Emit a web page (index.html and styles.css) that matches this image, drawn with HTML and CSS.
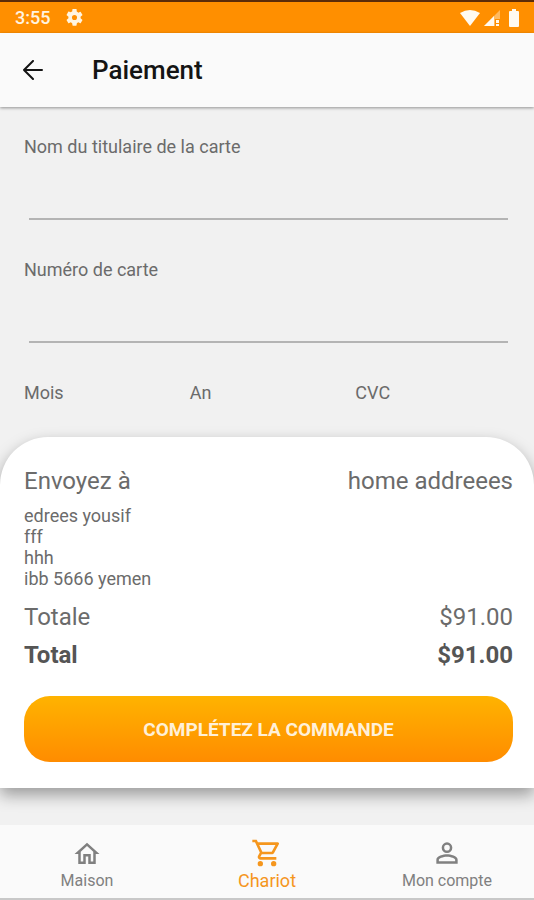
FILE: index.html
```html
<!DOCTYPE html>
<html lang="fr">
<head>
  <meta charset="utf-8">
  <meta name="viewport" content="width=device-width, initial-scale=1">
  <title>Paiement</title>
  <link rel="stylesheet" href="styles.css">
</head>
<body>
  <div class="status">
    <span class="status-time">3:55</span>
    <svg class="status-gear" viewBox="2 2 20 20" aria-hidden="true"><path fill="currentColor" d="M19.14 12.94c.04-.3.06-.61.06-.94s-.02-.64-.07-.94l2.03-1.58a.49.49 0 0 0 .12-.61l-1.92-3.32a.49.49 0 0 0-.59-.22l-2.39.96a7 7 0 0 0-1.62-.94l-.36-2.54A.48.48 0 0 0 13.92 2h-3.84c-.24 0-.43.17-.47.41l-.36 2.54c-.59.24-1.13.57-1.62.94l-2.39-.96a.48.48 0 0 0-.59.22L2.74 8.87a.47.47 0 0 0 .12.61l2.03 1.58a6 6 0 0 0 0 1.88l-2.03 1.58a.49.49 0 0 0-.12.61l1.92 3.32c.12.22.37.29.59.22l2.39-.96c.5.38 1.03.7 1.62.94l.36 2.54c.05.24.24.41.48.41h3.84c.24 0 .44-.17.47-.41l.36-2.54a7 7 0 0 0 1.62-.94l2.39.96c.22.08.47 0 .59-.22l1.92-3.32a.47.47 0 0 0-.12-.61zM12 15a3 3 0 1 1 0-6 3 3 0 0 1 0 6z"/></svg>
    <span class="status-icons">
      <svg width="20" height="16" viewBox="0 0 20 16" aria-hidden="true"><path fill="currentColor" d="M0 3Q10-3 20 3L10 16z"/></svg>
      <svg width="16" height="16" viewBox="0 0 16 16" aria-hidden="true"><path fill="currentColor" opacity=".4" d="M16 0v9h-5v7H0z"/><path fill="currentColor" d="M10 6v10H0zM12 10h3v3h-3zM12 14h3v2h-3z"/></svg>
      <svg class="status-battery" width="10" height="18" viewBox="0 0 10 18" aria-hidden="true"><path fill="currentColor" d="M3 0h4v2h2q1 0 1 1v14q0 1-1 1H1q-1 0-1-1V3q0-1 1-1h2z"/></svg>
    </span>
  </div>

  <header class="topbar">
    <button class="back" type="button" aria-label="Retour">
      <svg width="20" height="20" viewBox="0 0 20 20" aria-hidden="true"><path fill="none" stroke="currentColor" stroke-width="2" stroke-linecap="round" stroke-linejoin="round" d="M19 10H1M10 1L1 10l9 9"/></svg>
    </button>
    <h1>Paiement</h1>
  </header>

  <main>
    <form id="payment" class="form">
      <div class="field">
        <label for="holder">Nom du titulaire de la carte</label>
        <input id="holder" type="text" autocomplete="cc-name">
      </div>
      <div class="field">
        <label for="number">Numéro de carte</label>
        <input id="number" type="text" inputmode="numeric" autocomplete="cc-number">
      </div>
      <div class="details">
        <div class="detail">
          <label for="month">Mois</label>
          <input id="month" type="text" inputmode="numeric">
        </div>
        <div class="detail">
          <label for="year">An</label>
          <input id="year" type="text" inputmode="numeric">
        </div>
        <div class="detail">
          <label for="cvc">CVC</label>
          <input id="cvc" type="text" inputmode="numeric">
        </div>
      </div>
    </form>

    <section class="sheet">
      <div class="row"><span>Envoyez à</span><span>home addreees</span></div>
      <address>edrees yousif<br>fff<br>hhh<br>ibb 5666 yemen</address>
      <div class="row"><span>Totale</span><span>$91.00</span></div>
      <div class="row row-total"><span>Total</span><span>$91.00</span></div>
      <button class="submit" type="submit" form="payment">COMPLÉTEZ LA COMMANDE</button>
    </section>
  </main>

  <nav class="tabs">
    <a class="tab" href="#maison">
      <svg width="30" height="30" viewBox="0 0 24 24" aria-hidden="true"><path fill="currentColor" d="M12 5.690l5 4.500V18h-2v-6H9v6H7v-7.810l5-4.500M12 3L2 12h3v8h6v-6h2v6h6v-8h3L12 3z"/></svg>
      <span>Maison</span>
    </a>
    <a class="tab tab-active" href="#chariot" aria-current="page">
      <svg width="32" height="32" viewBox="0 0 24 24" aria-hidden="true"><path fill="currentColor" d="M15.550 13c.75 0 1.410-.41 1.750-1.030l3.580-6.490A.996.996 0 0 0 20.010 4H5.210l-.94-2H1v2h2l3.600 7.590-1.350 2.440C4.520 15.370 5.480 17 7 17h12v-2H7l1.100-2h7.450zM6.160 6h12.150l-2.760 5H8.530L6.160 6zM7 18a2 2 0 1 0 0 4 2 2 0 0 0 0-4zm10 0a2 2 0 1 0 0 4 2 2 0 0 0 0-4z"/></svg>
      <span>Chariot</span>
    </a>
    <a class="tab" href="#compte">
      <svg width="32" height="32" viewBox="0 0 24 24" aria-hidden="true"><path fill="currentColor" d="M12 5.900a2.100 2.100 0 1 1 0 4.200 2.100 2.100 0 0 1 0-4.200m0 9c2.970 0 6.100 1.460 6.100 2.100v1.100H5.900V17c0-.64 3.130-2.100 6.100-2.100M12 4a4 4 0 1 0 0 8 4 4 0 0 0 0-8zm0 9c-2.670 0-8 1.340-8 4v3h16v-3c0-2.660-5.330-4-8-4z"/></svg>
      <span>Mon compte</span>
    </a>
  </nav>
</body>
</html>
```
FILE: styles.css
```css
* {
  box-sizing: border-box;
}

body {
  margin: 0;
  min-height: 100vh;
  display: flex;
  flex-direction: column;
  background: #f1f1f1;
  color: #6b6b6b;
  font-family: Roboto, "Liberation Sans", sans-serif;
  font-size: 18px;
}

svg {
  display: block;
}

.status {
  display: flex;
  align-items: center;
  height: 33px;
  padding: 0 15px;
  border-top: 2px solid #5c2c08;
  background: #ff8f00;
  color: #fff4e0;
}

.status-time {
  font-weight: 500;
}

.status-gear {
  width: 17px;
  height: 17px;
  margin-left: 16px;
}

.status-icons {
  display: flex;
  align-items: center;
  gap: 4px;
  margin-left: auto;
  color: #fffaf0;
}

.status-battery {
  margin-left: 5px;
}

.topbar {
  display: flex;
  align-items: center;
  height: 74px;
  padding: 0 23px;
  background: #fafafa;
  color: #141414;
  box-shadow: 0 1px 3px rgba(0, 0, 0, 0.4);
}

.back {
  margin: 0 49px 0 0;
  padding: 0;
  border: 0;
  background: none;
  color: inherit;
}

h1 {
  margin: 0;
  font-size: 26px;
  font-weight: 500;
}

main {
  flex: 1;
}

.form,
.sheet {
  padding: 0 21px 0 24px;
}

.form {
  padding-top: 28px;
}

.field {
  display: flex;
  flex-direction: column;
  height: 123px;
}

label {
  line-height: 24px;
}

input {
  min-width: 0;
  border: 0;
  outline: 0;
  background: transparent;
  color: #333;
  font: inherit;
}

.field input {
  height: 61px;
  margin: 0 5px;
  padding: 20px 0 0;
  border-bottom: 2px solid #b4b4b4;
}

.details {
  display: grid;
  grid-template-columns: repeat(3, minmax(0, 1fr));
  gap: 8px;
}

.detail {
  display: flex;
  flex-direction: column;
}

.detail input {
  height: 32px;
  padding: 0;
}

.sheet {
  padding-top: 28px;
  padding-bottom: 26px;
  border-radius: 48px 48px 0 0;
  background: #fff;
  box-shadow: 0 7px 16px rgba(0, 0, 0, 0.36);
}

.row {
  display: flex;
  justify-content: space-between;
  font-size: 24px;
  line-height: 32px;
}

address {
  margin: 8px 0 12px;
  font-style: normal;
  line-height: 21px;
}

.row-total {
  margin-top: 6px;
  color: #555;
  font-weight: 700;
}

.submit {
  display: block;
  width: 100%;
  height: 66px;
  margin-top: 25px;
  border: 0;
  border-radius: 26px;
  background: linear-gradient(#ffb300, #ff8c00);
  color: #fff0d8;
  font: inherit;
  font-size: 19px;
  font-weight: 700;
}

.tabs {
  display: grid;
  grid-template-columns: repeat(3, minmax(0, 1fr));
  gap: 6px;
  height: 75px;
  padding: 0 0 5px;
  border-bottom: 2px solid #c8c8c8;
  background: #fafafa;
}

.tab {
  display: flex;
  flex-direction: column;
  align-items: center;
  justify-content: flex-end;
  color: #808080;
  font-size: 16px;
  line-height: 24px;
  text-decoration: none;
}

.tab-active {
  color: #f5961d;
  font-size: 18px;
}
```
